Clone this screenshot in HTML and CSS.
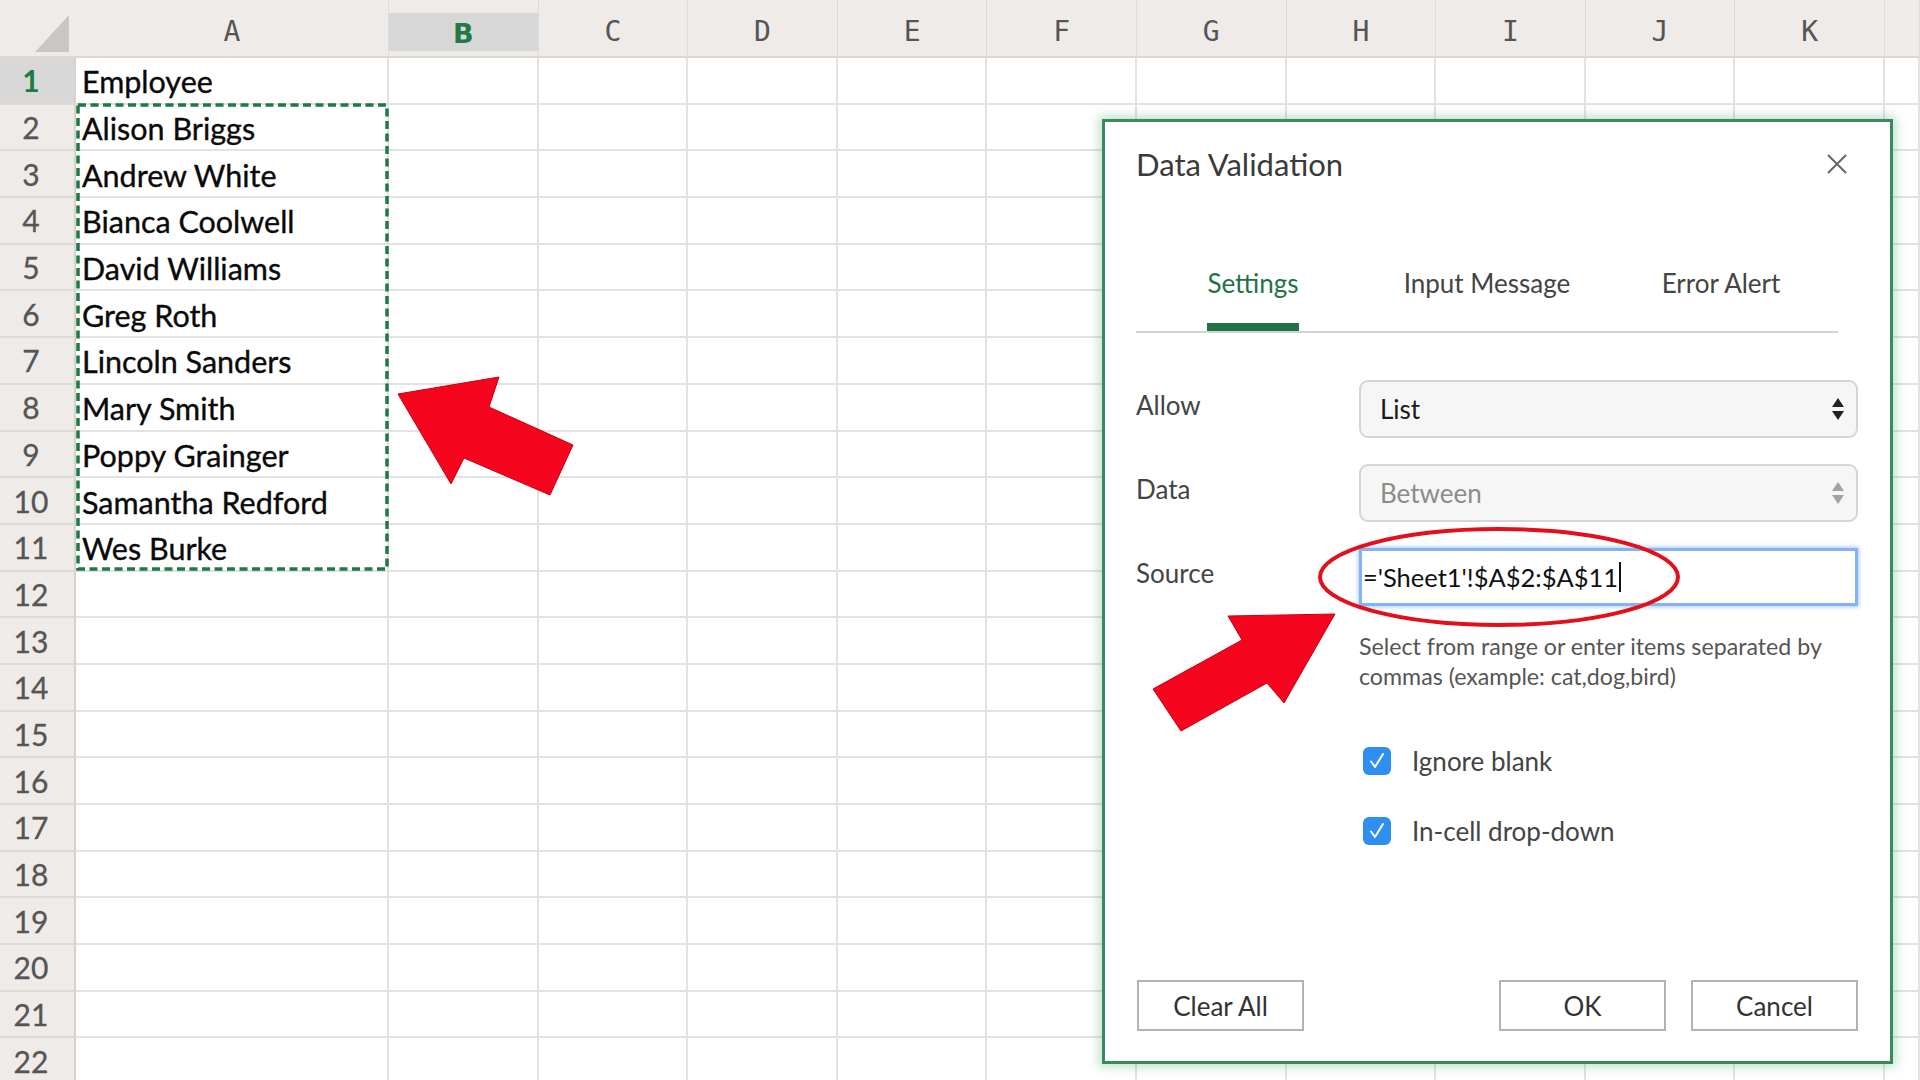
FILE: index.html
```html
<!DOCTYPE html>
<html>
<head>
<meta charset="utf-8">
<link rel="stylesheet" href="styles.css">
</head>
<body>
<div class="app">
  <div class="sheet">
    <div class="corner"><svg width="76" height="58" viewBox="0 0 76 58"><polygon points="35,52 69,52 69,15" fill="#c9c6c3"/></svg></div>
    <div class="ch">A</div><div class="ch sel"><span>B</span></div><div class="ch">C</div><div class="ch">D</div><div class="ch">E</div><div class="ch">F</div><div class="ch">G</div><div class="ch">H</div><div class="ch">I</div><div class="ch">J</div><div class="ch">K</div><div class="ch"></div>

    <div class="rh rsel">1</div><div class="c a">Employee</div><div class="c"></div><div class="c"></div><div class="c"></div><div class="c"></div><div class="c"></div><div class="c"></div><div class="c"></div><div class="c"></div><div class="c"></div><div class="c"></div><div class="c"></div>
    <div class="rh">2</div><div class="c a">Alison Briggs</div><div class="c"></div><div class="c"></div><div class="c"></div><div class="c"></div><div class="c"></div><div class="c"></div><div class="c"></div><div class="c"></div><div class="c"></div><div class="c"></div><div class="c"></div>
    <div class="rh">3</div><div class="c a">Andrew White</div><div class="c"></div><div class="c"></div><div class="c"></div><div class="c"></div><div class="c"></div><div class="c"></div><div class="c"></div><div class="c"></div><div class="c"></div><div class="c"></div><div class="c"></div>
    <div class="rh">4</div><div class="c a">Bianca Coolwell</div><div class="c"></div><div class="c"></div><div class="c"></div><div class="c"></div><div class="c"></div><div class="c"></div><div class="c"></div><div class="c"></div><div class="c"></div><div class="c"></div><div class="c"></div>
    <div class="rh">5</div><div class="c a">David Williams</div><div class="c"></div><div class="c"></div><div class="c"></div><div class="c"></div><div class="c"></div><div class="c"></div><div class="c"></div><div class="c"></div><div class="c"></div><div class="c"></div><div class="c"></div>
    <div class="rh">6</div><div class="c a">Greg Roth</div><div class="c"></div><div class="c"></div><div class="c"></div><div class="c"></div><div class="c"></div><div class="c"></div><div class="c"></div><div class="c"></div><div class="c"></div><div class="c"></div><div class="c"></div>
    <div class="rh">7</div><div class="c a">Lincoln Sanders</div><div class="c"></div><div class="c"></div><div class="c"></div><div class="c"></div><div class="c"></div><div class="c"></div><div class="c"></div><div class="c"></div><div class="c"></div><div class="c"></div><div class="c"></div>
    <div class="rh">8</div><div class="c a">Mary Smith</div><div class="c"></div><div class="c"></div><div class="c"></div><div class="c"></div><div class="c"></div><div class="c"></div><div class="c"></div><div class="c"></div><div class="c"></div><div class="c"></div><div class="c"></div>
    <div class="rh">9</div><div class="c a">Poppy Grainger</div><div class="c"></div><div class="c"></div><div class="c"></div><div class="c"></div><div class="c"></div><div class="c"></div><div class="c"></div><div class="c"></div><div class="c"></div><div class="c"></div><div class="c"></div>
    <div class="rh">10</div><div class="c a">Samantha Redford</div><div class="c"></div><div class="c"></div><div class="c"></div><div class="c"></div><div class="c"></div><div class="c"></div><div class="c"></div><div class="c"></div><div class="c"></div><div class="c"></div><div class="c"></div>
    <div class="rh">11</div><div class="c a">Wes Burke</div><div class="c"></div><div class="c"></div><div class="c"></div><div class="c"></div><div class="c"></div><div class="c"></div><div class="c"></div><div class="c"></div><div class="c"></div><div class="c"></div><div class="c"></div>
    <div class="rh">12</div><div class="c a"></div><div class="c"></div><div class="c"></div><div class="c"></div><div class="c"></div><div class="c"></div><div class="c"></div><div class="c"></div><div class="c"></div><div class="c"></div><div class="c"></div><div class="c"></div>
    <div class="rh">13</div><div class="c a"></div><div class="c"></div><div class="c"></div><div class="c"></div><div class="c"></div><div class="c"></div><div class="c"></div><div class="c"></div><div class="c"></div><div class="c"></div><div class="c"></div><div class="c"></div>
    <div class="rh">14</div><div class="c a"></div><div class="c"></div><div class="c"></div><div class="c"></div><div class="c"></div><div class="c"></div><div class="c"></div><div class="c"></div><div class="c"></div><div class="c"></div><div class="c"></div><div class="c"></div>
    <div class="rh">15</div><div class="c a"></div><div class="c"></div><div class="c"></div><div class="c"></div><div class="c"></div><div class="c"></div><div class="c"></div><div class="c"></div><div class="c"></div><div class="c"></div><div class="c"></div><div class="c"></div>
    <div class="rh">16</div><div class="c a"></div><div class="c"></div><div class="c"></div><div class="c"></div><div class="c"></div><div class="c"></div><div class="c"></div><div class="c"></div><div class="c"></div><div class="c"></div><div class="c"></div><div class="c"></div>
    <div class="rh">17</div><div class="c a"></div><div class="c"></div><div class="c"></div><div class="c"></div><div class="c"></div><div class="c"></div><div class="c"></div><div class="c"></div><div class="c"></div><div class="c"></div><div class="c"></div><div class="c"></div>
    <div class="rh">18</div><div class="c a"></div><div class="c"></div><div class="c"></div><div class="c"></div><div class="c"></div><div class="c"></div><div class="c"></div><div class="c"></div><div class="c"></div><div class="c"></div><div class="c"></div><div class="c"></div>
    <div class="rh">19</div><div class="c a"></div><div class="c"></div><div class="c"></div><div class="c"></div><div class="c"></div><div class="c"></div><div class="c"></div><div class="c"></div><div class="c"></div><div class="c"></div><div class="c"></div><div class="c"></div>
    <div class="rh">20</div><div class="c a"></div><div class="c"></div><div class="c"></div><div class="c"></div><div class="c"></div><div class="c"></div><div class="c"></div><div class="c"></div><div class="c"></div><div class="c"></div><div class="c"></div><div class="c"></div>
    <div class="rh">21</div><div class="c a"></div><div class="c"></div><div class="c"></div><div class="c"></div><div class="c"></div><div class="c"></div><div class="c"></div><div class="c"></div><div class="c"></div><div class="c"></div><div class="c"></div><div class="c"></div>
    <div class="rh">22</div><div class="c a"></div><div class="c"></div><div class="c"></div><div class="c"></div><div class="c"></div><div class="c"></div><div class="c"></div><div class="c"></div><div class="c"></div><div class="c"></div><div class="c"></div><div class="c"></div>
  </div>

  <svg class="marquee" width="313" height="468" viewBox="0 0 313 468"><rect x="2" y="2" width="309" height="464" fill="none" stroke="#1e7848" stroke-width="3.5" stroke-dasharray="8 4.5"/></svg>

  <div class="dialog">
    <div class="dlg-head">
      <div class="dlg-title">Data Validation</div>
      <svg class="close" width="20" height="20" viewBox="0 0 20 20"><path d="M1 1 L19 19 M19 1 L1 19" stroke="#666" stroke-width="2" fill="none"/></svg>
    </div>
    <div class="tabs">
      <div class="tab active"><span>Settings</span></div>
      <div class="tab"><span>Input Message</span></div>
      <div class="tab"><span>Error Alert</span></div>
    </div>
    <div class="form">
      <div class="lbl">Allow</div>
      <div class="select"><span>List</span><svg width="12" height="22" viewBox="0 0 12 22"><polygon points="0,9 6,0 12,9" fill="#222"/><polygon points="0,13 12,13 6,22" fill="#222"/></svg></div>
      <div class="lbl">Data</div>
      <div class="select dis"><span>Between</span><svg width="12" height="22" viewBox="0 0 12 22"><polygon points="0,9 6,0 12,9" fill="#a3a3a3"/><polygon points="0,13 12,13 6,22" fill="#a3a3a3"/></svg></div>
      <div class="lbl">Source</div>
      <div class="input"><span class="val">='Sheet1'!$A$2:$A$11</span></div>
      <div class="help">Select from range or enter items separated by<br>commas (example: cat,dog,bird)</div>
    </div>
    <div class="checks">
      <div class="chk"><svg width="28" height="28" viewBox="0 0 28 28"><rect x="0" y="0" width="28" height="28" rx="6" fill="#2f8ff0"/><path d="M8 14.5 L12 20 L20 7" stroke="#fff" stroke-width="2" fill="none" stroke-linecap="round" stroke-linejoin="round"/></svg><span>Ignore blank</span></div>
      <div class="chk"><svg width="28" height="28" viewBox="0 0 28 28"><rect x="0" y="0" width="28" height="28" rx="6" fill="#2f8ff0"/><path d="M8 14.5 L12 20 L20 7" stroke="#fff" stroke-width="2" fill="none" stroke-linecap="round" stroke-linejoin="round"/></svg><span>In-cell drop-down</span></div>
    </div>
    <div class="buttons">
      <button class="btn">Clear All</button>
      <div class="right">
        <button class="btn">OK</button>
        <button class="btn">Cancel</button>
      </div>
    </div>
  </div>

  <svg class="annot" width="1920" height="1080" viewBox="0 0 1920 1080">
    <polygon points="398,394 499,377 489,407 573,445 550,495 464,458 451,484" fill="#f5051d" stroke="#c8000f" stroke-width="1"/>
    <polygon points="1335,614 1228,616 1242,640 1153,689 1181,731 1267,683 1284,703" fill="#f5051d" stroke="#c8000f" stroke-width="1"/>
    <ellipse cx="1499" cy="577" rx="179" ry="48" fill="none" stroke="#e3101c" stroke-width="4"/>
  </svg>
</div>
</body>
</html>
```

FILE: styles.css
```css
html, body {
  margin: 0;
  padding: 0;
  background: #fff;
}
body {
  width: 1920px;
  height: 1080px;
  overflow: hidden;
  font-family: "Lato", "Open Sans", sans-serif;
}
.app {
  position: relative;
  width: 1920px;
  height: 1080px;
  overflow: hidden;
}
.sheet {
  display: grid;
  grid-template-columns: 76px 313px repeat(10, 149.6px) 1fr;
  grid-template-rows: 58px repeat(22, 46.7px);
}
.corner {
  background: #efebe8;
  border-bottom: 2px solid #dcd8d4;
  box-sizing: border-box;
}
.corner svg { display: block; }
.ch {
  background: #efebe8;
  border-right: 1px solid #dedad6;
  border-bottom: 2px solid #dcd8d4;
  box-sizing: border-box;
  display: flex;
  align-items: center;
  justify-content: center;
  font-family: "DejaVu Sans Mono", monospace;
  font-size: 28px;
  color: #555;
  padding-top: 6px;
}
.ch.sel {
  align-items: stretch;
  padding: 13px 0 5px 0;
}
.ch.sel span {
  flex: 1;
  background: #d7d7d7;
  display: flex;
  align-items: center;
  justify-content: center;
  color: #1f7a45;
  font-weight: bold;
  font-family: "DejaVu Sans", sans-serif;
  font-size: 27px;
  padding-top: 3px;
}
.rh {
  background: #efebe8;
  border-bottom: 2px solid #dedad6;
  border-right: 2px solid #d6d2ce;
  box-sizing: border-box;
  display: flex;
  align-items: center;
  justify-content: center;
  padding-right: 12px;
  font-size: 30px;
  color: #555;
  -webkit-text-stroke: 0.3px #555;
}
.rh.rsel {
  background: #d8d8d8;
  color: #1f7a45;
  font-weight: bold;
  -webkit-text-stroke: 0;
}
.c {
  border-right: 2px solid #e2e2e2;
  border-bottom: 2px solid #e2e2e2;
  box-sizing: border-box;
  display: flex;
  align-items: center;
  padding-left: 6px;
  padding-top: 2px;
  font-size: 30.5px;
  color: #0a0a0a;
  white-space: nowrap;
  -webkit-text-stroke: 0.35px #0a0a0a;
}
.marquee {
  position: absolute;
  left: 76px;
  top: 103px;
}
.dialog {
  position: absolute;
  left: 1102px;
  top: 119px;
  width: 791px;
  height: 945px;
  box-sizing: border-box;
  border: 3px solid #3b8a5c;
  background: #fff;
  box-shadow: 0 0 10px 3px rgba(70, 170, 110, 0.35);
  padding: 25px 32px 30px 31px;
  display: flex;
  flex-direction: column;
  color: #444;
}
.dlg-head {
  display: flex;
  align-items: center;
  justify-content: space-between;
  height: 34px;
}
.dlg-title {
  font-size: 31px;
  line-height: 34px;
  color: #3a3a3a;
}
.close {
  margin-right: 11px;
}
.tabs {
  margin-top: 87px;
  width: 702px;
  display: grid;
  grid-template-columns: repeat(3, 1fr);
  border-bottom: 2px solid #d3d3d3;
}
.tab {
  display: flex;
  justify-content: center;
}
.tab span {
  font-size: 26px;
  line-height: 30px;
  padding-bottom: 25px;
  border-bottom: 8px solid transparent;
  color: #444;
}
.tab.active span {
  color: #217346;
  border-bottom-color: #217346;
}
.form {
  margin-top: 47px;
  display: grid;
  grid-template-columns: 223px 1fr;
  row-gap: 26px;
  align-items: center;
}
.lbl {
  font-size: 26px;
  color: #444;
  margin-top: -8px;
}
.select {
  height: 58px;
  box-sizing: border-box;
  border: 2px solid #d5d5d5;
  border-radius: 9px;
  background: #f6f6f6;
  display: flex;
  align-items: center;
  justify-content: space-between;
  padding: 0 12px 0 19px;
  font-size: 26px;
  color: #1a1a1a;
}
.select.dis {
  color: #8c8c8c;
}
.input {
  height: 58px;
  box-sizing: border-box;
  border: 3px solid #82b3f3;
  box-shadow: 0 0 4px 1px rgba(110, 160, 240, 0.6);
  background: #fff;
  display: flex;
  align-items: center;
  padding-left: 1px;
  font-size: 25.5px;
  color: #111;
}
.val {
  border-right: 2px solid #111;
  line-height: 30px;
  padding-right: 1px;
}
.help {
  grid-column: 2;
  margin-top: -1px;
  font-size: 23.2px;
  line-height: 30px;
  color: #555;
  white-space: nowrap;
}
.checks {
  margin-top: 50px;
  padding-left: 227px;
  display: flex;
  flex-direction: column;
  gap: 30px;
}
.chk {
  height: 40px;
  display: flex;
  align-items: center;
  gap: 21px;
  font-size: 26px;
  color: #444;
}
.buttons {
  margin-top: auto;
  display: flex;
  justify-content: space-between;
  padding-left: 1px;
}
.right {
  display: flex;
  gap: 25px;
}
.btn {
  width: 167px;
  height: 51px;
  box-sizing: border-box;
  border: 2px solid #b3b3b3;
  background: #fff;
  font-family: "Lato", sans-serif;
  font-size: 26px;
  color: #333;
  padding: 0;
  border-radius: 0;
}
.annot {
  position: absolute;
  left: 0;
  top: 0;
  pointer-events: none;
}
```
